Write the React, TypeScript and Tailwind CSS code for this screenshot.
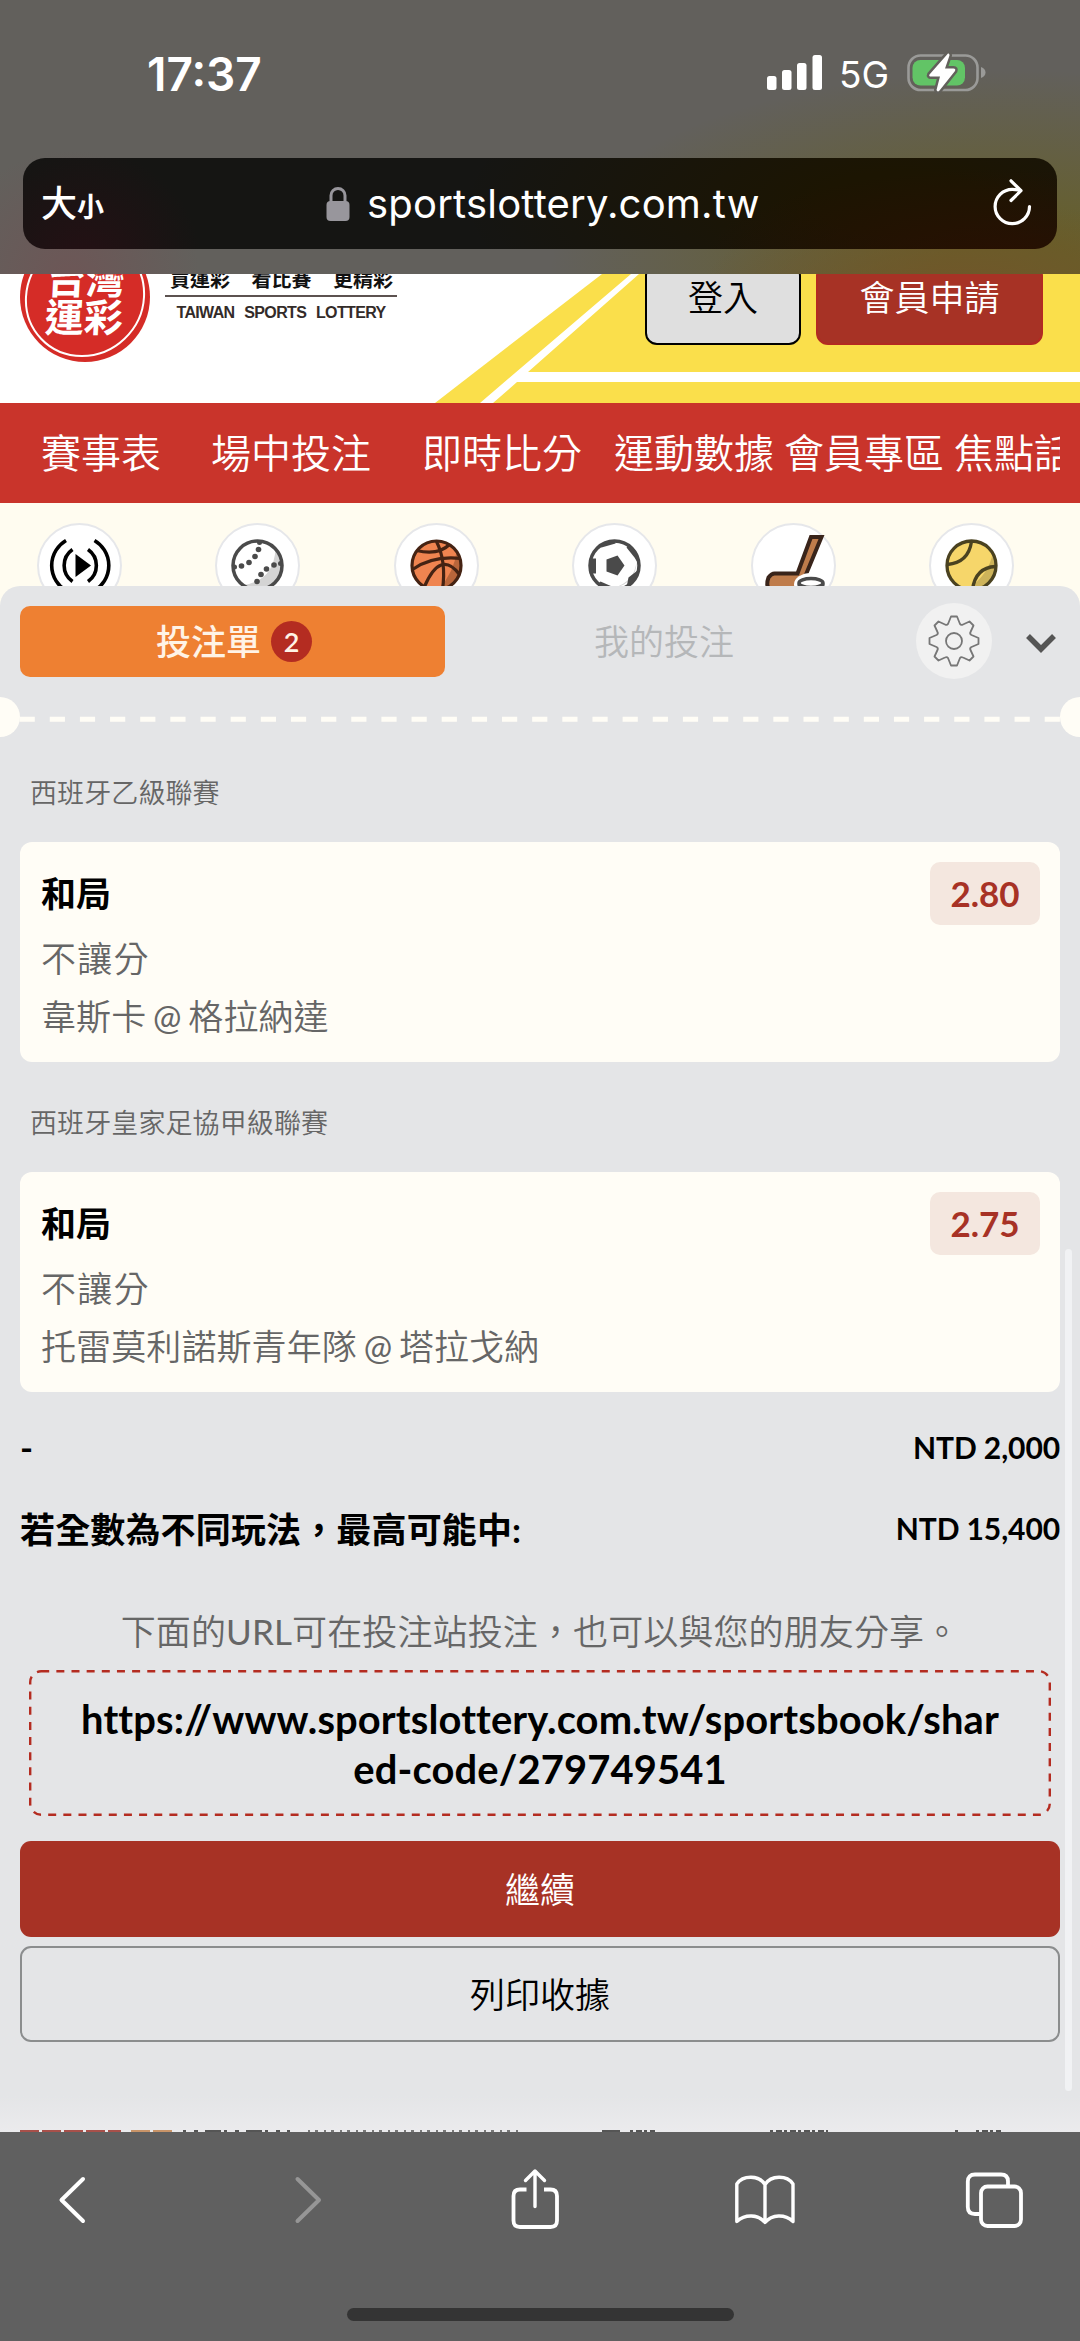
import type { ReactNode } from "react";

const CJK = "font-[Lato,'Noto_Sans_CJK_TC',sans-serif]";
const SYSTEM = "font-[Inter,'Noto_Sans_CJK_TC',sans-serif]";

interface Bet {
  league: string;
  pick: string;
  market: string;
  home: string;
  away: string;
  odds: string;
}

const BETS: Bet[] = [
  { league: "西班牙乙級聯賽", pick: "和局", market: "不讓分", home: "韋斯卡", away: "格拉納達", odds: "2.80" },
  { league: "西班牙皇家足協甲級聯賽", pick: "和局", market: "不讓分", home: "托雷莫利諾斯青年隊", away: "塔拉戈納", odds: "2.75" },
];

const NAV = [
  { label: "賽事表", width: "w-[170px]" },
  { label: "場中投注", width: "w-[211px]" },
  { label: "即時比分", width: "w-[192px]" },
  { label: "運動數據", width: "w-[170px]" },
  { label: "會員專區", width: "w-[170px]" },
  { label: "焦點話題", width: "w-[160px]" },
];

function StatusBar() {
  return (
    <div className="h-[158px] shrink-0 pl-[147px] pr-[93px] pt-[50px] flex items-start justify-between">
      <span className="text-[46px] leading-[48px] font-semibold">17:37</span>
      <div className="flex items-start">
        <svg width="56" height="48" viewBox="0 0 56 48" fill="white">
          <rect x="0" y="26" width="9.5" height="14" rx="2.5" />
          <rect x="15" y="20" width="9.5" height="20" rx="2.5" />
          <rect x="30" y="13" width="9.5" height="27" rx="2.5" />
          <rect x="45.5" y="5" width="9.5" height="35" rx="2.5" />
        </svg>
        <span className="ml-[16px] mt-px w-[51px] text-[37px] leading-[48px]">5G</span>
        <svg className="ml-[17px]" width="80" height="48" viewBox="0 0 80 48" fill="none">
          <rect x="1.5" y="5.5" width="69" height="34.500" rx="12" stroke="#9a9a98" strokeWidth="2.600" />
          <path d="M74 17v11c3-1 4.500-3 4.500-5.500s-1.500-4.500-4.500-5.500z" fill="#9a9a98" />
          <rect x="5.500" y="10" width="52.500" height="25.500" rx="8" fill="#62c466" />
          <path
            d="M41 3.500 L22.500 24.500 Q21.500 26.500 24 26.500 H33 L29.500 40 Q30.500 42.500 32.500 40.500 L48 21 Q49 18.500 46.500 18.500 H38 L42.500 5.500 Q42.500 3 41 3.500z"
            fill="white"
            stroke="#62605b"
            strokeWidth="5"
            strokeLinejoin="round"
            paintOrder="stroke"
          />
        </svg>
      </div>
    </div>
  );
}

function AddressBar() {
  return (
    <div className="mx-[23px] h-[91px] rounded-[22px] flex items-center justify-between pl-[18px] pr-[24px] bg-[radial-gradient(ellipse_300px_90px_at_95%_110%,#281002_0%,transparent_100%),radial-gradient(ellipse_440px_160px_at_85%_50%,#1c1502_20%,transparent_100%),radial-gradient(circle_at_60px_110px,#251014_0,transparent_120px)] bg-[#151513]">
      <span className="w-[80px] flex items-baseline font-medium leading-[40px] font-['Noto_Sans_CJK_TC',sans-serif]">
        <span className="text-[36px]">大</span>
        <span className="text-[27px] font-bold">小</span>
      </span>
      <span className="pl-[11px] flex items-center">
        <svg className="mr-[17px]" width="24" height="36" viewBox="0 0 24 36" fill="none">
          <path d="M5 17V9.500a7 7 0 0 1 14 0V17" stroke="#98969c" strokeWidth="3" />
          <rect x="0.500" y="15" width="23" height="20" rx="4" fill="#98969c" />
        </svg>
        <span className="w-[392px] whitespace-nowrap text-[40px] leading-[44px] tracking-[0.200px]">sportslottery.com.tw</span>
      </span>
      <span className="w-[80px] flex justify-end">
        <svg width="42" height="50" viewBox="0 0 42 50" fill="none" stroke="white" strokeWidth="3.200" strokeLinecap="round" strokeLinejoin="round">
          <path d="M29 11.500Q25 10.300 21.300 10.300A17.200 17.200 0 1 0 38.500 27.500" />
          <path d="M20 1.800 L30 11.700 L20 21.500" />
        </svg>
      </span>
    </div>
  );
}

function SiteHeader() {
  return (
    <header className="relative h-[129px] overflow-hidden bg-white flex justify-between">
      <svg className="absolute inset-0" width="1080" height="129" viewBox="0 0 1080 129">
        <path d="M435 129 L602 0 H1080 V129z" fill="#fadf4b" />
        <path d="M480 129 L631 0 H639 L528 98 H1080 V108 H517 L493 129z" fill="white" />
      </svg>
      <div className="relative -mt-[42px] ml-[20px] flex items-start">
        <div className="size-[130px] rounded-full bg-[#d52c27] p-[5px]">
          <div className="size-full rounded-full border-[2.500px] border-white text-white font-bold text-[39px] leading-[38px] pt-[21px] text-center -skew-x-3">
            <div>台灣</div>
            <div>運彩</div>
          </div>
        </div>
        <div className="ml-[15px] w-[232px] text-center">
          <div className="mt-[38px] h-[27px] border-b-2 border-[#5c5250] flex justify-between pl-[5px] pr-[4px] text-[20px] leading-[19px] font-bold text-[#111]">
            <span>買運彩</span>
            <span>看比賽</span>
            <span>更精彩</span>
          </div>
          <div className="mt-[7px] text-[16px] leading-[18px] font-bold text-[#332b29] whitespace-nowrap tracking-[-0.650px] [word-spacing:6px] font-['Liberation_Sans',sans-serif]">
            TAIWAN SPORTS LOTTERY
          </div>
        </div>
      </div>
      <div className="relative -mt-[10px] mr-[37px] flex gap-[15px] text-[35px] leading-[40px] font-[350]">
        <button className="h-[81px] w-[156px] rounded-[12px] border-[2.500px] border-black bg-[#dfdfdf] pb-[15px]">登入</button>
        <button className="h-[81px] w-[227px] rounded-[12px] border-2 border-[#b22a22] bg-[#a73225] pb-[15px] text-white">會員申請</button>
      </div>
    </header>
  );
}

function NavBar() {
  return (
    <nav className="h-[100px] bg-[#c9342b] px-[20px] text-white">
      <div className="h-full overflow-hidden flex items-center pl-[21px] text-[40px] font-[350] whitespace-nowrap">
        {NAV.map((item) => (
          <span key={item.label} className={`shrink-0 ${item.width}`}>
            {item.label}
          </span>
        ))}
      </div>
    </nav>
  );
}

function SportCircle({ children }: { children: ReactNode }) {
  return (
    <span className="size-[85px] shrink-0 rounded-full border-2 border-[#e6e7ea] bg-white flex items-center justify-center">
      <svg width="81" height="81" viewBox="-40.500 -40.500 81 81" fill="none">
        {children}
      </svg>
    </span>
  );
}

function SportsStrip() {
  return (
    <div className="h-[120px] bg-[#fffcf0] pl-[37px] pr-[66px] pt-[20px] flex items-start justify-between">
      <SportCircle>
        <g stroke="black" strokeWidth="3.600">
          <path d="M-13.500 -25A29 29 0 0 0 -13.500 25" />
          <path d="M15 -25A29 29 0 0 1 15 25" />
          <path d="M-7 -16A19.500 19.500 0 0 0 -7 16" />
          <path d="M8.500 -16A19.500 19.500 0 0 1 8.500 16" />
        </g>
        <path d="M-4 -11.500 L11.500 0 L-4 11.500z" fill="black" />
      </SportCircle>
      <SportCircle>
        <path d="M18 -16Q16 16 -16 20A25 25 0 0 0 18 -16" fill="#d4d4d4" />
        <circle r="24.500" stroke="#4a4a4a" strokeWidth="3.500" />
        <g fill="#4a4a4a">
          <circle cx="2" cy="-23" r="2.500" />
          <circle cx="1" cy="-16" r="2.800" />
          <circle cx="-2.500" cy="-9" r="2.800" />
          <circle cx="-8.500" cy="-3" r="2.800" />
          <circle cx="-16" cy="0.500" r="2.800" />
          <circle cx="-23" cy="1.500" r="2.500" />
          <circle cx="23" cy="-2" r="2.500" />
          <circle cx="16.500" cy="-0.500" r="2.800" />
          <circle cx="9" cy="3.500" r="2.800" />
          <circle cx="3.500" cy="9" r="2.800" />
          <circle cx="-0.500" cy="16" r="2.800" />
        </g>
      </SportCircle>
      <SportCircle>
        <circle r="24.500" fill="#ef8450" />
        <path d="M20 -14Q18 6 2 24A25 25 0 0 0 20 -14" fill="#b9663b" />
        <g stroke="#452313" strokeWidth="3.200">
          <circle r="24.500" />
          <path d="M0 -24Q10 -4 6 24" />
          <path d="M-20 -15Q2 -10 13 -21" />
          <path d="M-24 4Q-4 -10 24 -7" />
          <path d="M-12 21Q4 -16 23 9" />
        </g>
      </SportCircle>
      <SportCircle>
        <path d="M22 -4Q20 16 0 22A25 25 0 0 0 22 -4" fill="#d4d4d4" />
        <circle r="24.500" stroke="#4a4a4a" strokeWidth="3.500" />
        <g fill="#4a4a4a">
          <path d="M-8 -6 L3 -10 L10 0 L3 10 L-8 6z" />
          <path d="M-13 -18 L1 -22 V-25 A25 25 0 0 0 -16 -20z" />
          <path d="M12 -18 L20 -8 L23 -3 L25 -2 A25 25 0 0 0 15 -21z" />
          <path d="M-25 -7 H-18.500 V8 H-25z" />
          <path d="M-14 16 L2 23 L-4 25 L-17 19z" />
          <path d="M23 5 L14 12 L12 22 A25 25 0 0 0 24 6z" />
        </g>
      </SportCircle>
      <SportCircle>
        <path d="M17.500 -28.500 H28 L10 15 Q5 24 -5 24 H-24 Q-28 20 -25 12 Q-22 8 -19 8 H4z" fill="#bf7c4b" stroke="#39241a" strokeWidth="4" />
        <ellipse cx="17.500" cy="19" rx="17" ry="11.500" fill="white" />
        <ellipse cx="17.500" cy="17.500" rx="12" ry="4.500" stroke="#4a4a4a" strokeWidth="3.500" />
        <path d="M5.500 18V28H29.500V18" stroke="#4a4a4a" strokeWidth="3" />
      </SportCircle>
      <SportCircle>
        <circle r="24.500" fill="#f6d66a" />
        <path d="M21 -12Q18 8 -4 24A25 25 0 0 0 21 -12" fill="#cdb35a" />
        <g stroke="#4a4220" strokeWidth="3.300">
          <circle r="24.500" />
          <path d="M-24 -1Q-3 -3 0 -24" />
          <path d="M24 1Q4 2 1 24" />
        </g>
      </SportCircle>
    </div>
  );
}

function SlipTabs() {
  return (
    <div className="mt-[17px] h-[76px] pl-[20px] flex items-center">
      <button className="h-[71px] w-[425px] rounded-[10px] bg-[#ee8032] pl-[3px] flex items-center justify-center text-[#fff3e6]">
        <span className="text-[35px] font-medium">投注單</span>
        <span className="ml-[10px] size-[41px] rounded-full bg-[#b42c21] text-[27px] leading-[41px] font-semibold text-center">2</span>
      </button>
      <button className="w-[438px] text-[35px] font-[350] text-[#b5b7b9]">我的投注</button>
      <span className="ml-[33px] size-[76px] shrink-0 rounded-full bg-[#f1f1f1] flex items-center justify-center">
        <svg width="54" height="54" viewBox="-27 -27 54 54" fill="none" stroke="#777" strokeWidth="1.800" strokeLinejoin="round">
          <path d="M-3 -24.500H3L6 -17Q7 -15.500 9 -16.500L15.500 -19.500L19.500 -15.500L16.500 -9Q15.500 -7 17.500 -6L24.500 -3V3L17.500 6Q15.500 7 16.500 9L19.500 15.500L15.500 19.500L9 16.500Q7 15.500 6 17L3 24.500H-3L-6 17Q-7 15.500 -9 16.500L-15.500 19.500L-19.500 15.500L-16.500 9Q-15.500 7 -17.500 6L-24.500 3V-3L-17.500 -6Q-15.500 -7 -16.500 -9L-19.500 -15.500L-15.500 -19.500L-9 -16.500Q-7 -15.500 -6 -17z" />
          <circle r="8" />
        </svg>
      </span>
      <svg className="ml-[33px] mt-[3px]" width="32" height="22" viewBox="0 0 32 22" fill="none" stroke="#555" strokeWidth="5.500">
        <path d="M3 4 L16 17 L29 4" />
      </svg>
    </div>
  );
}

function TicketDivider() {
  return (
    <svg className="mt-[18px] block" width="1080" height="40" viewBox="0 0 1080 40">
      <circle cx="0" cy="20" r="20" fill="#fffdf6" />
      <circle cx="1080" cy="20" r="20" fill="#fffdf6" />
      <path d="M19.600 22.300H1060" stroke="#fffdf6" strokeWidth="5" strokeDasharray="15.200 14.950" />
    </svg>
  );
}

function BetCard({ bet }: { bet: Bet }) {
  return (
    <section>
      <h3 className="h-[105px] pl-[10px] pt-[36px] text-[27px] leading-[40px] font-[350] tracking-[0.100px] text-[#666]">{bet.league}</h3>
      <div className="h-[220px] mb-[5px] rounded-[12px] bg-[#fffdf6] px-[20px] pt-[20px]">
        <div className="flex justify-between">
          <span className="pl-px text-[35px] leading-[63px] font-bold">{bet.pick}</span>
          <span className="h-[63px] w-[110px] rounded-[10px] bg-[#f4e7df] text-center text-[35px] leading-[63px] font-bold text-[#a73225]">{bet.odds}</span>
        </div>
        <div className="pl-px pt-[3px] text-[35px] leading-[60px] font-[350] tracking-[1.200px] text-[#666]">{bet.market}</div>
        <div className="pl-px pt-px text-[35px] leading-[55px] font-[350] tracking-[0.100px] text-[#666] flex">
          <span>{bet.home}</span>
          <span className="w-[42px] text-center text-[34px] font-normal">@</span>
          <span>{bet.away}</span>
        </div>
      </div>
    </section>
  );
}

function ShareCode() {
  return (
    <div className="relative mx-[9px] h-[146px] pt-[24px] text-center text-[39.900px] leading-[50px] font-bold tracking-[0.120px] [font-variant-ligatures:none]">
      <svg className="absolute inset-0" width="1022" height="146" viewBox="0 0 1022 146" fill="none">
        <rect x="1.200" y="1.200" width="1019.600" height="143.600" rx="11" stroke="#b42c21" strokeWidth="2.400" strokeDasharray="8 7.150" />
      </svg>
      https://www.sportslottery.com.tw/sportsbook/shar
      <br />
      ed-code/279749541
    </div>
  );
}

function BetSlip() {
  return (
    <main className="relative -mt-[37px] h-[1546px] overflow-hidden rounded-t-[20px] bg-[#e4e5e7]">
      <SlipTabs />
      <TicketDivider />
      <div className="px-[20px]">
        {BETS.map((bet) => (
          <BetCard key={bet.league} bet={bet} />
        ))}
        <div className="mt-[33px] h-[44px] flex items-center justify-between font-bold">
          <span className="text-[35px]">-</span>
          <span className="text-[30px] tracking-[-0.100px]">NTD 2,000</span>
        </div>
        <div className="mt-[38px] h-[44px] flex items-center justify-between font-bold">
          <span className="text-[35px] tracking-[0.150px]">若全數為不同玩法，最高可能中:</span>
          <span className="pb-px text-[30px] tracking-[-0.100px]">NTD 15,400</span>
        </div>
        <p className="mt-[56px] h-[63px] text-center text-[35px] leading-[48px] font-[350] tracking-[0.120px] text-[#666]">
          下面的<span className="font-normal">URL</span>可在投注站投注，也可以與您的朋友分享。
        </p>
        <ShareCode />
        <button className="mt-[25px] block h-[96px] w-full rounded-[11px] bg-[#a73225] text-[35px] font-[350] text-white">繼續</button>
        <button className="mt-[9px] block h-[96px] w-full rounded-[11px] border-2 border-[#8b8d8e] text-[35px] font-[350]">列印收據</button>
      </div>
      {/* scroll thumb */}
      <div className="absolute right-[8px] top-[663px] h-[842px] w-[7px] rounded-full bg-[#f1f2f4]" />
      {/* page content peeking out above the toolbar */}
      <svg className="absolute bottom-0 left-0 bg-linear-to-b from-[#e4e5e7] to-[#ebebed]" width="1080" height="36" viewBox="0 0 1080 36" fill="none" strokeWidth="2">
        <path d="M20 35H121" stroke="#a8504a" strokeDasharray="19 3" />
        <path d="M131 35H172" stroke="#c99468" strokeDasharray="19 3" />
        <path d="M183 35H290" stroke="#555" strokeDasharray="3 8 4 7 16 3" />
        <path d="M308 35H520" stroke="#777" strokeDasharray="2 5 3 6" />
        <path d="M602 35H620M955 35H958" stroke="#555" />
        <path d="M630 35H655M770 35H828M976 35H1001" stroke="#555" strokeDasharray="3 3 6 2" />
      </svg>
    </main>
  );
}

function Toolbar() {
  return (
    <footer className="h-[209px] bg-[#606060] pt-[32px]">
      <svg className="block" width="1080" height="70" viewBox="0 0 1080 70" fill="none" stroke="white" strokeWidth="3.800" strokeLinecap="round" strokeLinejoin="round">
        <path d="M83 15 L61.500 36 L83 57" strokeWidth="4" />
        <path d="M297.500 15 L319 36 L297.500 57" stroke="#969696" strokeWidth="4" />
        <path d="M526.500 25.500H520Q513.500 25.500 513.500 32V56.500Q513.500 63 520 63H550.500Q557 63 557 56.500V32Q557 25.500 550.500 25.500H544" strokeLinecap="butt" />
        <path d="M535 42.500V7M525.500 16.500L535 7L544.500 16.500" strokeWidth="3.400" />
        <path d="M765 20.500C759 11 743 11 736.800 20V57.500C745 50 758 50 765 58.500C772 50 785 50 793 57.500V20C787 11 771 11 765 20.500V58" strokeWidth="3.400" />
        <path d="M979 50H975Q967.800 50 967.800 43V17.500Q967.800 10.500 975 10.500H1001Q1008 10.500 1008 17.500V21" />
        <rect x="981" y="22.500" width="40" height="39.500" rx="6.500" />
      </svg>
      <div className="mx-auto mt-[74px] h-[13px] w-[387px] rounded-full bg-[#343434]" />
    </footer>
  );
}

export default function App() {
  return (
    <div className={`w-[1080px] h-[2341px] overflow-hidden text-black ${CJK}`}>
      <div
        className={`h-[274px] text-white bg-[radial-gradient(ellipse_260px_90px_at_960px_290px,#71562a_0%,transparent_100%),radial-gradient(ellipse_460px_200px_at_1010px_270px,#665f28_15%,transparent_100%),radial-gradient(circle_at_70px_280px,#6d5656_0,transparent_130px)] bg-[#62605c] ${SYSTEM}`}
      >
        <StatusBar />
        <AddressBar />
      </div>
      <SiteHeader />
      <NavBar />
      <SportsStrip />
      <BetSlip />
      <Toolbar />
    </div>
  );
}
